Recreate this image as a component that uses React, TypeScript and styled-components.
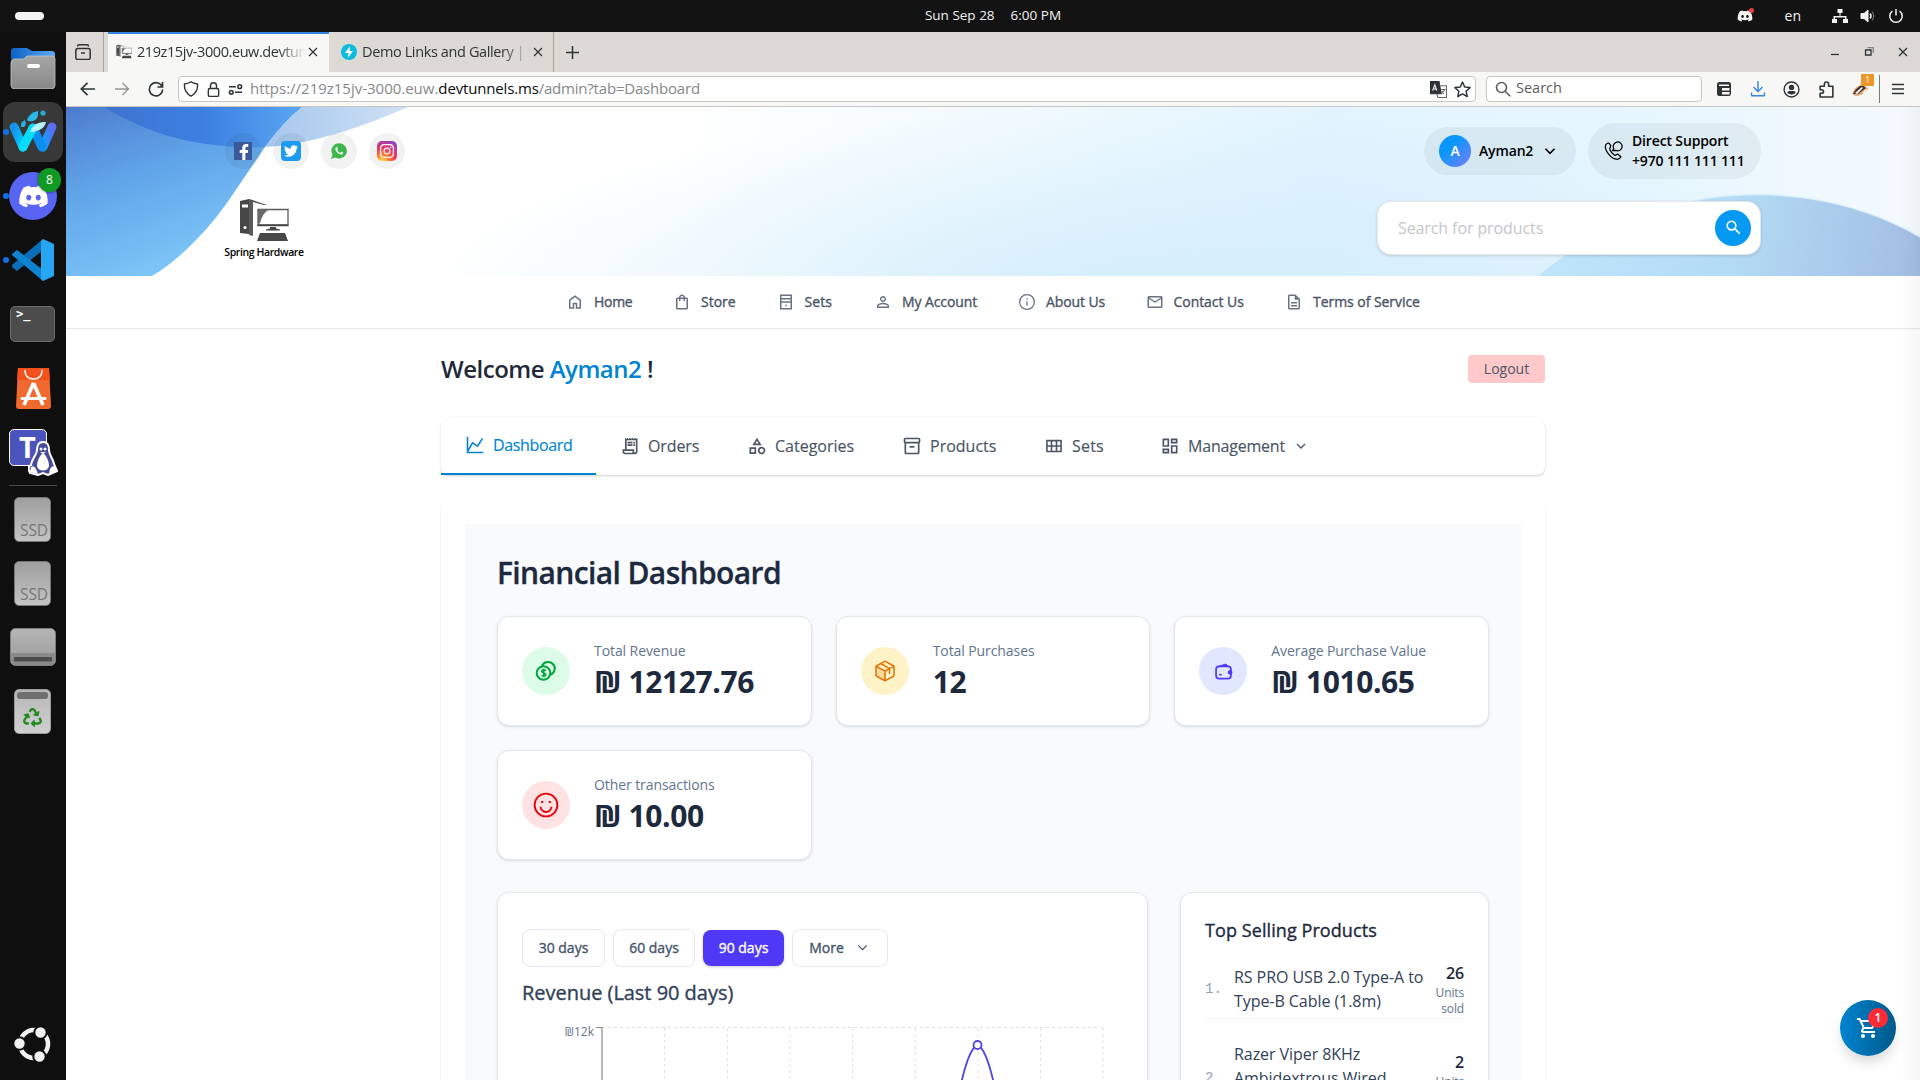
import React from 'react';
import styled, { createGlobalStyle, css } from 'styled-components';
import {
  MdOutlineShoppingBag, MdPersonOutline, MdMailOutline, MdOutlineDescription,
  MdOutlineReceiptLong, MdOutlineCategory, MdOutlineInventory2, MdOutlineDashboard,
  MdSearch, MdOutlineShoppingCart,
} from 'react-icons/md';
import { FaFacebookF, FaTwitter, FaInstagram, FaDiscord, FaRecycle } from 'react-icons/fa';
import { IoLogoWhatsapp } from 'react-icons/io';
import { PiPackageDuotone } from 'react-icons/pi';

const SANS = '"Open Sans", "Noto Sans", sans-serif';

const Global = createGlobalStyle`
  * { box-sizing: border-box; }
  body { margin: 0; font-family: ${SANS}; background: #fff; overflow: hidden; }
  svg { display: block; flex: none; }
`;

const medium = css`
  font-weight: 500;
  -webkit-text-stroke: 0.35px currentColor;
`;

/* ---------- desktop ---------- */

const Desktop = styled.div`
  width: 1920px;
  height: 1080px;
  overflow: hidden;
  display: grid;
  grid-template-rows: 32px 1fr;
  grid-template-columns: 66px 1fr;
  position: relative;
`;

const TopBar = styled.header`
  grid-column: 1 / 3;
  background: #131313;
  color: #f2f2f2;
  display: grid;
  grid-template-columns: 1fr auto 1fr;
  align-items: center;
  padding: 0 16px 1px 15px;
  font-size: 13.5px;
`;

const Workspace = styled.div`
  width: 29px;
  height: 8px;
  border-radius: 4px;
  background: #f4f4f4;
`;

const Clock = styled.div`
  display: flex;
  gap: 16px;
  white-space: nowrap;
  padding: 0 0 2px 67px;
`;

const Tray = styled.div`
  display: flex;
  align-items: center;
  justify-content: flex-end;
`;

const DiscordTray = styled.div`
  position: relative;
  margin-right: 32px;
  &::after {
    content: '';
    position: absolute;
    top: 0;
    right: -1px;
    width: 5px;
    height: 5px;
    border-radius: 50%;
    background: #f23f42;
  }
`;

const Lang = styled.span`
  font-size: 14px;
  margin-right: 31px;
`;

const TrayIcons = styled.div`
  display: flex;
  align-items: center;
  gap: 12px;
`;

const Dock = styled.aside`
  background: #0f0f0f;
  display: flex;
  flex-direction: column;
  align-items: center;
  padding: 4px 0;
`;

const Slot = styled.div<{ $bottom?: boolean; $running?: boolean }>`
  width: 66px;
  height: 64px;
  display: flex;
  align-items: center;
  justify-content: center;
  position: relative;
  flex: none;
  ${p => p.$bottom && css`margin-top: auto;`}
  ${p => p.$running && css`
    &::before {
      content: '';
      position: absolute;
      left: 3px;
      top: 29px;
      width: 6px;
      height: 6px;
      border-radius: 50%;
      background: #0f72e5;
    }
  `}
`;

const ActiveTile = styled.div`
  width: 60px;
  height: 60px;
  border-radius: 12px;
  background: #383838;
  display: flex;
  align-items: center;
  justify-content: center;
`;

const DockBadge = styled.span`
  position: absolute;
  top: 4px;
  right: 5px;
  width: 23px;
  height: 24px;
  border-radius: 12px;
  background: #109a25;
  box-shadow: 0 0 3px #0009;
  color: #fff;
  font-size: 12px;
  line-height: 24px;
  text-align: center;
`;

const DockDivider = styled.div`
  width: 48px;
  height: 1px;
  margin: 1px 0;
  background: #4a4a4a;
  flex: none;
`;

const SsdTile = styled.div`
  width: 37px;
  height: 45px;
  margin-right: 1px;
  border-radius: 5px;
  border: 1px solid #757575;
  background: linear-gradient(#9f9f9f, #c4c4c4);
  color: #777;
  font-size: 15.5px;
  line-height: 65px;
  letter-spacing: -0.1px;
  padding-left: 5px;
  overflow: hidden;
  white-space: nowrap;
`;

const TerminalTile = styled.div`
  width: 45px;
  height: 36px;
  margin-right: 1px;
  border: 1px solid #6d6d6d;
  border-radius: 5px;
  background: #4c4c4c;
  color: #fff;
  font: 700 12px/15px "DejaVu Sans Mono", monospace;
  padding-left: 5px;
`;

/* ---------- browser chrome ---------- */

const Browser = styled.div`
  display: flex;
  flex-direction: column;
  min-width: 0;
  overflow: hidden;
  background: #fff;
`;

const TabStrip = styled.div`
  height: 40px;
  flex: none;
  background: #dddad5;
  display: flex;
  color: #2e3436;
`;

const ViewButton = styled.div`
  width: 38px;
  margin-right: 4px;
  padding-right: 3px;
  border-right: 1px solid #aaa6a0;
  display: flex;
  align-items: center;
  justify-content: center;
`;

const BrowserTab = styled.div<{ $active?: boolean }>`
  width: ${p => (p.$active ? 221 : 225)}px;
  display: flex;
  align-items: center;
  padding: 0 11px 1px ${p => (p.$active ? 8 : 12)}px;
  ${p => p.$active
    ? css`background: #f7f7f5; box-shadow: inset 0 2px #3584e4;`
    : css`border-right: 1px solid #aaa6a0; padding-right: 10px;`}
`;

const TabTitle = styled.span<{ $track: number }>`
  flex: 1;
  margin-left: 5px;
  padding-bottom: 1px;
  overflow: hidden;
  white-space: nowrap;
  font-size: 14.5px;
  letter-spacing: ${p => p.$track}px;
  mask-image: linear-gradient(90deg, #000 82%, transparent 99%);
`;

const NewTab = styled.div`
  width: 36px;
  display: flex;
  align-items: center;
  justify-content: center;
`;

const WindowControls = styled.div`
  margin-left: auto;
  display: flex;
  align-items: center;
  gap: 20px;
  padding-right: 10px;
`;

const Toolbar = styled.div`
  height: 35px;
  flex: none;
  background: #f7f7f5;
  border-bottom: 1px solid #c9c5c0;
  display: flex;
  align-items: center;
  padding: 0 15px 0 14px;
  color: #2e3436;
`;

const NavButtons = styled.div`
  width: 98px;
  display: flex;
  gap: 18px;
`;

const UrlBar = styled.div`
  width: 1298px;
  height: 26px;
  background: #fff;
  border: 1px solid #c9c5c0;
  border-radius: 4px;
  display: flex;
  align-items: center;
  padding: 0 4px;
  gap: 7px;
`;

const Url = styled.div`
  flex: 1;
  font-size: 15px;
  letter-spacing: -0.01px;
  line-height: 22px;
  padding-bottom: 2px;
  color: #85888a;
  white-space: nowrap;
  strong { font-weight: 400; color: #0c0c0d; letter-spacing: -0.16px; }
  em { font-style: normal; letter-spacing: -0.2px; }
`;

const SearchBox = styled.div`
  width: 216px;
  height: 26px;
  margin-left: 10px;
  background: #fff;
  border: 1px solid #c9c5c0;
  border-radius: 4px;
  display: flex;
  align-items: center;
  gap: 5px;
  padding-left: 8px;
  font-size: 14.5px;
  line-height: 22px;
  color: #5b5f61;
  span { padding-bottom: 2px; }
`;

const ToolbarIcons = styled.div`
  margin-left: auto;
  display: flex;
  align-items: center;
  gap: 17.5px;
`;

const BadgerIcon = styled.div`
  position: relative;
  width: 16px;
`;

const BadgerCount = styled.span`
  position: absolute;
  top: -7px;
  right: -6px;
  width: 13px;
  height: 12px;
  background: #ec9528;
  color: #fff;
  font-size: 9px;
  line-height: 11px;
  text-align: center;
`;

const ToolbarRule = styled.div`
  width: 1px;
  height: 28px;
  background: #76797a;
  margin: 0 -6px 0 -7px;
`;

/* ---------- site header ---------- */

const Banner = styled.section`
  height: 169px;
  flex: none;
  position: relative;
`;

const BannerArt = styled.svg`
  position: absolute;
  inset: 0;
`;

const BannerContent = styled.div`
  position: relative;
  width: 1536px;
  height: 169px;
  margin: 0 auto;
  display: flex;
  justify-content: space-between;
`;

const Socials = styled.div`
  display: flex;
  gap: 12px;
  padding-top: 26px;
`;

const SocialCircle = styled.div`
  width: 36px;
  height: 36px;
  border-radius: 50%;
  background: rgba(0, 0, 0, 0.05);
  display: flex;
  align-items: center;
  justify-content: center;
`;

const SocialTile = styled.div<{ $bg: string; $size: number; $radius: number; $end?: boolean }>`
  width: ${p => p.$size}px;
  height: ${p => p.$size}px;
  border-radius: ${p => p.$radius}px;
  background: ${p => p.$bg};
  color: #fff;
  display: flex;
  align-items: ${p => (p.$end ? 'flex-end' : 'center')};
  justify-content: ${p => (p.$end ? 'flex-end' : 'center')};
  overflow: hidden;
`;

const Brand = styled.div`
  width: 78px;
  margin-top: 30px;
  display: flex;
  flex-direction: column;
  align-items: center;
  font-size: 10.5px;
  font-weight: 600;
  letter-spacing: -0.4px;
  line-height: 14px;
  white-space: nowrap;
  color: #000;
`;

const BrandName = styled.span`margin-top: 4px;`;

const HeaderRight = styled.div`
  display: flex;
  flex-direction: column;
  align-items: flex-end;
  padding-top: 16px;
`;

const Pills = styled.div`
  display: flex;
  align-items: center;
  gap: 12px;
`;

const Pill = styled.div<{ $w: number; $h: number; $gap: number }>`
  width: ${p => p.$w}px;
  height: ${p => p.$h}px;
  padding: 0 15px;
  border-radius: 28px;
  background: rgba(20, 30, 40, 0.055);
  display: flex;
  align-items: center;
  gap: ${p => p.$gap}px;
  font-size: 14px;
  font-weight: 600;
  letter-spacing: -0.15px;
  line-height: 20px;
  color: #000;
  white-space: nowrap;
`;

const Avatar = styled.span`
  width: 32px;
  height: 32px;
  border-radius: 50%;
  background: linear-gradient(135deg, #0a97fb 35%, #7c7cfb);
  color: #fff;
  line-height: 32px;
  text-align: center;
`;

const SiteSearch = styled.div`
  width: 384px;
  height: 54px;
  margin-top: 22px;
  border-radius: 14px;
  background: #fff;
  border: 1px solid #e5e7eb;
  box-shadow: 0 1px 3px rgba(0, 0, 0, 0.14);
  display: flex;
  align-items: center;
  justify-content: space-between;
  padding: 0 9px 1px 20px;
  font-size: 16px;
  letter-spacing: -0.1px;
  color: #c3c6cb;
`;

const SearchButton = styled.span`
  width: 36px;
  height: 36px;
  border-radius: 50%;
  background: #0599f4;
  color: #fff;
  display: flex;
  align-items: center;
  justify-content: center;
`;

const SiteNav = styled.nav`
  height: 53px;
  flex: none;
  border-bottom: 1px solid #e5e7eb;
  display: flex;
  justify-content: center;
  gap: 40px;
`;

const SiteNavItem = styled.a<{ $w: number; $track: number }>`
  width: ${p => p.$w}px;
  display: flex;
  align-items: center;
  gap: 10px;
  font-size: 14px;
  letter-spacing: ${p => p.$track}px;
  ${medium}
  color: #4a5565;
  white-space: nowrap;
  svg { color: #6a7282; }
  span { padding-bottom: 1px; }
`;

/* ---------- admin ---------- */

const Main = styled.main`
  width: 1104px;
  margin: 0 auto;
  flex: 1;
`;

const WelcomeRow = styled.div`
  height: 88px;
  display: flex;
  align-items: center;
  justify-content: space-between;
  padding-bottom: 8px;
`;

const Welcome = styled.h1`
  margin: 0;
  font-size: 24px;
  font-weight: 600;
  line-height: 32px;
  letter-spacing: -0.5px;
  color: #1e2939;
  span { color: #0084d1; }
`;

const Logout = styled.button`
  width: 77px;
  height: 28px;
  padding: 0;
  border: 0;
  border-radius: 4px;
  background: #ffc9c9;
  color: #4a5565;
  font: 400 14px/26px ${SANS};
`;

const AdminTabs = styled.div`
  height: 58px;
  border-radius: 12px 12px 8px 8px;
  box-shadow: 0 1px 3px rgba(0, 0, 0, 0.1), 0 1px 2px rgba(0, 0, 0, 0.1);
  display: flex;
  align-items: stretch;
`;

const AdminTab = styled.div<{ $w: number; $pad?: number; $active?: boolean; $track?: number }>`
  width: ${p => p.$w}px;
  padding-left: ${p => p.$pad ?? 24}px;
  display: flex;
  align-items: center;
  gap: 8px;
  font-size: 16px;
  letter-spacing: ${p => p.$track ?? 0}px;
  -webkit-text-stroke: 0.15px currentColor;
  white-space: nowrap;
  color: ${p => (p.$active ? '#0084d1' : '#4a5565')};
  border-bottom: ${p => (p.$active ? '2px solid #0084d1' : '0')};
`;

const Panel = styled.section`
  margin-top: 25px;
  padding: 24px 24px;
  height: 700px;
  border-radius: 8px;
  box-shadow: 0 2px 3px rgba(0, 0, 0, 0.08);
`;

const Board = styled.div`
  padding: 32px;
  height: 700px;
  background: #f8fafc;
`;

const BoardTitle = styled.h2`
  margin: 0 0 24px;
  font-size: 30px;
  font-weight: 600;
  line-height: 34px;
  padding-bottom: 2px;
  letter-spacing: -0.62px;
  -webkit-text-stroke: 0.3px currentColor;
  color: #1d293d;
`;

const cardBox = css`
  background: #fff;
  border: 1px solid #e2e8f0;
  border-radius: 12px;
  box-shadow: 0 1px 3px rgba(0, 0, 0, 0.1), 0 1px 2px -1px rgba(0, 0, 0, 0.1);
`;

const Stats = styled.div`
  display: grid;
  grid-template-columns: repeat(3, 1fr);
  gap: 24px;
`;

const StatCard = styled.div`
  ${cardBox}
  height: 110px;
  padding: 24px;
  display: flex;
  align-items: center;
  gap: 24px;
`;

const StatIcon = styled.div<{ $bg: string; $fg: string }>`
  width: 48px;
  height: 48px;
  border-radius: 50%;
  background: ${p => p.$bg};
  color: ${p => p.$fg};
  display: flex;
  align-items: center;
  justify-content: center;
`;

const StatLabel = styled.div`
  font-size: 14px;
  line-height: 20px;
  margin-bottom: 3px;
  letter-spacing: -0.08px;
  color: #62748e;
`;

const StatValue = styled.div`
  font-size: 30px;
  font-weight: 700;
  line-height: 36px;
  padding-bottom: 1px;
  letter-spacing: -0.4px;
  color: #1d293d;
  white-space: nowrap;
`;

const Lower = styled.div`
  display: grid;
  grid-template-columns: 651px 1fr;
  gap: 32px;
  margin-top: 32px;
`;

const RevenueCard = styled.div`
  ${cardBox}
  height: 460px;
  padding: 36px 24px 0;
`;

const Ranges = styled.div`
  display: flex;
  gap: 8px;
  align-items: center;
`;

const RangeButton = styled.button<{ $w: number; $on?: boolean }>`
  width: ${p => p.$w}px;
  height: ${p => (p.$on ? 36 : 38)}px;
  padding: 0 0 1px;
  display: flex;
  align-items: center;
  justify-content: center;
  gap: 10px;
  border-radius: 8px;
  border: ${p => (p.$on ? '0' : '1px solid #e2e8f0')};
  background: ${p => (p.$on ? '#4f39f6' : '#fff')};
  color: ${p => (p.$on ? '#fff' : '#45556c')};
  box-shadow: ${p => (p.$on ? '0 1px 3px rgba(0,0,0,.2)' : 'none')};
  font: 500 14px ${SANS};
  ${medium}
`;

const ChartTitle = styled.h3`
  margin: 12px 0 5px;
  font-size: 20px;
  ${medium}
  line-height: 28px;
  letter-spacing: -0.03px;
  color: #314158;
`;

const AxisLabel = styled.text`
  font: 400 12px ${SANS};
  fill: #64748b;
`;

const TopCard = styled.div`
  ${cardBox}
  height: 460px;
  padding: 23px 24px 0;
`;

const TopTitle = styled.h3`
  margin: 0 0 17px;
  font-size: 18px;
  ${medium}
  line-height: 28px;
  letter-spacing: 0.08px;
  color: #1d293d;
`;

const ProductRow = styled.div`
  display: flex;
  align-items: center;
  padding-bottom: 1px;
  margin-bottom: 23px;
  border-bottom: 1px solid #f1f5f9;
`;

const Rank = styled.span`
  width: 29px;
  font: 14px/20px "Liberation Mono", monospace;
  color: #90a1b9;
`;

const ProductName = styled.span`
  flex: 1;
  font-size: 16px;
  line-height: 24px;
  letter-spacing: -0.06px;
  color: #314158;
`;

const Sold = styled.div`
  width: 29px;
  text-align: right;
  font-size: 12px;
  line-height: 16px;
  letter-spacing: -0.15px;
  color: #62748e;
  margin-left: 8px;
  b { display: block; font-size: 16px; font-weight: 600; line-height: 24px; color: #1d293d; }
`;

const CartButton = styled.div`
  position: absolute;
  left: 1840px;
  top: 1000px;
  width: 56px;
  height: 56px;
  border-radius: 50%;
  background: linear-gradient(90deg, #0084d1, #00598a);
  box-shadow: 0 8px 14px -3px rgba(0, 0, 0, 0.18);
  display: flex;
  align-items: center;
  justify-content: center;
  color: #fff;
`;

const CartCount = styled.span`
  position: absolute;
  top: 8px;
  right: 8px;
  width: 20px;
  height: 20px;
  border-radius: 50%;
  background: #fb2c36;
  font-size: 12px;
  font-weight: 600;
  line-height: 20px;
  text-align: center;
`;

const EdgeShade = styled.div`
  position: absolute;
  right: 0;
  top: 107px;
  bottom: 0;
  width: 20px;
  background: linear-gradient(90deg, transparent, rgba(0, 0, 0, 0.035));
`;

/* ---------- drawings ---------- */

type LineProps = { s?: number; w?: number; vb?: number; children: React.ReactNode };
const Line = ({ s = 18, w = 1.6, vb = 24, children }: LineProps) => (
  <svg width={s} height={s} viewBox={`0 0 ${vb} ${vb}`} fill="none" stroke="currentColor" strokeWidth={w}>{children}</svg>
);

const FilesIcon = () => (
  <svg width="46" height="42" viewBox="0 0 46 42">
    <defs>
      <linearGradient id="fb" x2="1"><stop stopColor="#0b62c4" /><stop offset="1" stopColor="#5aa9f5" /></linearGradient>
      <linearGradient id="fg" x2="0" y2="1"><stop stopColor="#a6a6a6" /><stop offset="1" stopColor="#888" /></linearGradient>
    </defs>
    <path d="M1 12V4q0-3 3-3h13l5 3h20q3 0 3 3v9H1z" fill="url(#fb)" />
    <path d="M1 16q0-3 3-4l10 0 3-3h25q3 0 3 3v26q0 4-4 4H5q-4 0-4-4z" fill="url(#fg)" stroke="#c4c4c4" strokeWidth=".8" />
    <rect x="17" y="17" width="13" height="4" rx="2" fill="#fff" />
  </svg>
);

const WaterfoxIcon = () => (
  <svg width="50" height="44" viewBox="0 0 50 44" fill="none" strokeLinecap="round">
    <defs>
      <linearGradient id="w1" x2="1" y2="1"><stop stopColor="#1691ec" /><stop offset="1" stopColor="#00d5ff" /></linearGradient>
      <linearGradient id="w2" x1="1" x2="0" y2="1"><stop stopColor="#5c6cf0" /><stop offset="1" stopColor="#08a5ff" /></linearGradient>
    </defs>
    <path d="M44 17 35 37" stroke="url(#w2)" strokeWidth="9" />
    <path d="M25 18 34 37" stroke="#0a8fee" strokeWidth="9" />
    <path d="M6 17 15 37" stroke="url(#w1)" strokeWidth="9" />
    <path d="M15 37 25 18" stroke="#08dcff" strokeWidth="9" />
    <path d="M22 22q4-11 16-10-2 9-16 10z" fill="#b8f3ff" />
    <path d="M19 10q2-7 11-9 1 8-5 10-5 1-6-1z" fill="#2bb8e8" />
    <circle cx="35" cy="3" r="2.6" fill="#2aa8d8" />
    <path d="M13 17q-1-5 4-7 2 5-1 7z" fill="#25b0df" />
  </svg>
);

const VsCodeIcon = () => (
  <svg width="42" height="42" viewBox="0 0 42 42">
    <path d="M31 0v11L5 32 0 28v-2z" fill="#0a6fb8" />
    <path d="M0 15 5 11l26 20v11L0 16z" fill="#0f83cf" />
    <path d="M31 0 42 5v32l-11 5-2-2V2z" fill="#27a5f0" />
  </svg>
);

const AppCenterIcon = () => (
  <svg width="37" height="42" viewBox="0 0 37 42" fill="none">
    <path d="M3 1h31l2 38q0 3-3 3H4q-3 0-3-3z" fill="#f06a30" />
    <path d="M3 1h31l.8 12H2z" fill="#f4511c" />
    <g stroke="#fff">
      <path d="M10 3q0 9 8.500 9t8.500-9" strokeWidth="1.600" />
      <path d="M18.500 16 9 38M18.500 16 28 38" strokeWidth="3.600" />
      <path d="M7 31.500h23" strokeWidth="3" strokeLinecap="round" />
    </g>
  </svg>
);

const TeamsTile = styled.div`
  position: relative;
  width: 47px;
  height: 47px;
`;
const TeamsSquare = styled.div`
  width: 38px;
  height: 37px;
  margin-left: -1px;
  border: 1.5px solid #fff;
  border-radius: 5px;
  background: #4b53bc;
  color: #fff;
  font: 700 29px/33px ${SANS};
  text-align: center;
`;
const Penguin = styled.svg`
  position: absolute;
  right: -1px;
  bottom: 0;
`;

const TeamsIcon = () => (
  <TeamsTile>
    <TeamsSquare>T</TeamsSquare>
    <Penguin width="30" height="35" viewBox="0 0 30 35">
      <path d="M15 1c-5 0-6 4-6 8 0 5-5 8-6 15-3 1-3 4-1 8l8 2 5-2 5 2 9-4-3-7c-1-6-5-9-5-14 0-5-1-8-6-8z" fill="#464a9b" stroke="#fff" strokeWidth="2" />
      <path d="M15 12c-4 3-6 9-6 13 1 6 11 6 12 0 0-4-2-10-6-13z" fill="#fff" />
      <path d="M3 26q3-2 5 2l2 5-8-2zM27 26q-3-2-5 2l-1 5 7-3z" fill="#fff" />
      <circle cx="13" cy="8" r="1.500" fill="#fff" /><circle cx="17" cy="8" r="1.500" fill="#fff" />
      <path d="M12 11h6l-3 2z" fill="#fff" />
    </Penguin>
  </TeamsTile>
);

const DriveIcon = () => (
  <svg width="46" height="38" viewBox="0 0 46 38">
    <defs><linearGradient id="dr" x2="0" y2="1"><stop stopColor="#b5b5b5" /><stop offset="1" stopColor="#9b9b9b" /></linearGradient></defs>
    <rect x=".5" y=".5" width="45" height="37" rx="5" fill="url(#dr)" stroke="#7e7e7e" />
    <path d="M1 25h44v8q0 4-5 4H6q-5 0-5-4z" fill="#8a8a8a" />
    <rect x="4" y="29" width="38" height="4.500" rx="1" fill="#4c4c4c" />
  </svg>
);

const TrashTile = styled.div`
  width: 37px;
  height: 45px;
  margin-right: 1px;
  border-radius: 5px;
  border: 1px solid #9a9a9a;
  background: linear-gradient(#b6b6b6, #d0d0d0);
  color: #248a22;
  display: flex;
  flex-direction: column;
  align-items: center;
  gap: 9px;
  padding-top: 2px;
  &::before {
    content: '';
    width: 31px;
    height: 7px;
    border-radius: 3px;
    background: #6f6f6f;
    flex: none;
  }
`;

const UbuntuIcon = () => (
  <svg width="38" height="38" viewBox="0 0 38 38" fill="none">
    <circle cx="20" cy="19" r="14" stroke="#f2f2f2" strokeWidth="4.500" />
    <g fill="#f2f2f2" stroke="#0f0f0f" strokeWidth="2">
      <circle cx="5.500" cy="18.500" r="6.200" /><circle cx="26.500" cy="7.500" r="6.200" /><circle cx="25.500" cy="31.500" r="6.200" />
    </g>
  </svg>
);

const ComputerLogo = ({ w = 50, h = 42 }: { w?: number; h?: number }) => (
  <svg width={w} height={h} viewBox="0 0 50 42">
    <path d="M1 2 10 0v35L1 34z" fill="#474747" />
    <path d="M10 0 28 6h-3L11 2z" fill="#444" />
    <path d="M10 0 14 2v35l-4-1z" fill="#5a5a5a" />
    <rect x="3" y="5.500" width="6" height="3" fill="#fff" />
    <circle cx="6" cy="28.500" r="1.500" fill="#fff" />
    <path d="M19 10.500h30V26H19z" fill="#fff" stroke="#5a5a5a" strokeWidth="1.300" />
    <path d="M19 10.500h11q-7 4-9 14h-2z" fill="#6b6b6b" />
    <path d="M18.500 25.500h31v1.800h-31zM31 28h6v1.500l4 1v1H27v-1l4-1z" fill="#474747" />
    <path d="M21 34h25l3 8H18z" fill="#474747" />
  </svg>
);

const ChevronDown = ({ s = 16, w = 2 }: { s?: number; w?: number }) => <Line s={s} w={w}><path d="m6 9 6 6 6-6" /></Line>;

const bannerPaths = {
  blue: 'M0 0H236Q218 14 199 40L163 93Q147 116 130 133Q108 156 86 169H0Z',
  swoosh: 'M38 0C75 22 120 42 199 40Q218 14 236 0Z',
  pale: 'M236 0H342C300 18 250 37 199 40Q218 14 236 0Z',
};

const BannerBackground = () => (
  <BannerArt width="1854" height="169" viewBox="0 0 1854 169" preserveAspectRatio="none">
    <defs>
      <linearGradient id="sky" x1="0" y1="0" x2="1854" y2="0" gradientUnits="userSpaceOnUse">
        <stop offset="0" stopColor="#fff" /><stop offset=".33" stopColor="#fff" /><stop offset=".5" stopColor="#f2fafe" />
        <stop offset=".68" stopColor="#e2f4fe" /><stop offset=".85" stopColor="#e6f6fe" /><stop offset="1" stopColor="#f5fafe" />
      </linearGradient>
      <radialGradient id="lit" gradientUnits="userSpaceOnUse" cx="0" cy="0" r="1" gradientTransform="translate(1080 190) scale(720 190)">
        <stop stopColor="#cdebfb" stopOpacity=".85" /><stop offset="1" stopColor="#cdebfb" stopOpacity="0" />
      </radialGradient>
      <linearGradient id="left" x1="0" y1="0" x2="60" y2="169" gradientUnits="userSpaceOnUse"><stop stopColor="#4c7ccd" /><stop offset=".5" stopColor="#62a6ea" /><stop offset="1" stopColor="#7cc3f6" /></linearGradient>
      <linearGradient id="deep" x2="1"><stop stopColor="#3f75cf" /><stop offset=".5" stopColor="#3c7fe2" /><stop offset="1" stopColor="#5aa7f1" /></linearGradient>
      <linearGradient id="pale" x2="1"><stop stopColor="#a5c7ee" /><stop offset="1" stopColor="#d0e1f4" /></linearGradient>
      <linearGradient id="wave" x1="1480" y1="120" x2="1854" y2="169" gradientUnits="userSpaceOnUse"><stop stopColor="#bfe5fa" /><stop offset=".5" stopColor="#b3dbf5" /><stop offset="1" stopColor="#a2bde3" /></linearGradient>
    </defs>
    <rect width="1854" height="169" fill="url(#sky)" />
    <rect width="1854" height="169" fill="url(#lit)" />
    <path d={bannerPaths.blue} fill="url(#left)" />
    <path d={bannerPaths.swoosh} fill="url(#deep)" />
    <path d={bannerPaths.pale} fill="url(#pale)" />
    <path d="M1472 169Q1550 105 1626 94C1700 79 1785 90 1854 130V169Z" fill="url(#wave)" />
    <path d="M1626 94C1700 79 1785 90 1854 130" fill="none" stroke="#d9effb" strokeWidth="1.500" />
  </BannerArt>
);

const gridX = [80, 142.6, 205.3, 268, 330.7, 393.300, 456, 518.600, 581];

const RevenueChart = () => (
  <svg width="600" height="180" viewBox="0 0 600 180" fill="none">
    <g stroke="#dfe1e4" strokeDasharray="3 3">
      <path d="M80 15.500H581" strokeWidth="1.200" />
      {gridX.slice(1).map(x => <path key={x} d={`M${x} 16V180`} />)}
    </g>
    <path d="M74 15.500h6V180" stroke="#8a8a8a" strokeWidth="1.200" />
    <AxisLabel x="72" y="23.500" textAnchor="end">₪12k</AxisLabel>
    <path d="M431 110C437 80 445 36 455.500 33.500C466 36 474 80 480 110" stroke="#4f46e5" strokeWidth="1.800" />
    <circle cx="455.500" cy="33" r="4" fill="#fff" stroke="#4f46e5" strokeWidth="1.800" />
  </svg>
);

/* ---------- data ---------- */

const siteNav = [
  { label: 'Home', w: 67, track: -0.3, icon: <svg width="18" height="18" viewBox="0 0 24 24" fill="currentColor"><path d="M6 19h3v-6h6v6h3v-9l-6-4.500L6 10zm-2 2V9l8-6 8 6v12h-7v-6h-2v6z" /></svg> },
  { label: 'Store', w: 63.5, track: 0, icon: <MdOutlineShoppingBag size={18} /> },
  { label: 'Sets', w: 57.5, track: 0.1, icon: <Line w={2}><path d="M5 3h14v18H5zM5 7.500h14M5 12h14" /><path d="M11 16.500h2" /></Line> },
  { label: 'My Account', w: 104, track: -0.1, icon: <MdPersonOutline size={18} /> },
  { label: 'About Us', w: 87.5, track: -0.1, icon: <Line w={1.700}><circle cx="12" cy="12" r="9.800" /><path d="M12 11v6M12 7v2" /></Line> },
  { label: 'Contact Us', w: 99.5, track: -0.05, icon: <MdMailOutline size={18} /> },
  { label: 'Terms of Service', w: 135, track: -0.05, icon: <MdOutlineDescription size={18} /> },
];

const products = [
  { rank: '1.', name: 'RS PRO USB 2.0 Type-A to Type-B Cable (1.8m)', sold: 26 },
  { rank: '2.', name: 'Razer Viper 8KHz Ambidextrous Wired Gaming Mouse', sold: 2 },
];

const stats = [
  {
    label: 'Total Revenue', value: '₪ 12127.76', bg: '#dcfce7', fg: '#00a63e',
    icon: (
      <Line s={24} w={2}>
        <circle cx="9.500" cy="14" r="6.800" /><path d="M8 7.200a6.600 6.600 0 1 1 8.300 8.600" />
        <path d="M12 11.600q-2.500-1.400-4 0-.8 1.500 1.500 2.300 3 .9 2 2.500-1.500 1.300-4 0M9.700 9.800v8.400" strokeWidth="1.600" />
      </Line>
    ),
  },
  { label: 'Total Purchases', value: '12', bg: '#fef3c6', fg: '#e17100', icon: <PiPackageDuotone size={24} /> },
  {
    label: 'Average Purchase Value', value: '₪ 1010.65', bg: '#e0e7ff', fg: '#4f39f6',
    icon: (
      <Line s={21} w={2}>
        <rect x="3.500" y="6" width="17" height="14" rx="3.500" /><path d="M5 6.500 14.500 3.500 17.500 6z" fill="currentColor" strokeWidth="1" />
        <circle cx="19.500" cy="13" r="2.200" fill="currentColor" strokeWidth="1" /><path d="M7 15.700h3" strokeWidth="1.800" />
      </Line>
    ),
  },
  {
    label: 'Other transactions', value: '₪ 10.00', bg: '#ffe2e2', fg: '#e7000b',
    icon: (
      <Line s={26} w={1.700}>
        <circle cx="12" cy="12" r="10.500" /><path d="M7 13.500a5 5 0 0 0 10 0" />
        <path d="M8.500 8.200v2M15.500 8.200v2" strokeWidth="2" />
      </Line>
    ),
  },
];

export default function App() {
  return (
    <Desktop>
      <Global />
      <TopBar>
        <Workspace />
        <Clock><span>Sun Sep 28</span><span>6:00 PM</span></Clock>
        <Tray>
          <DiscordTray><FaDiscord size={16} /></DiscordTray>
          <Lang>en</Lang>
          <TrayIcons>
            <svg width="16" height="16" viewBox="0 0 16 16" fill="#f2f2f2"><path d="M5.500 1h5v4h-2v3h6v3H16v4h-5v-4h2V9.500H3V11h2v4H0v-4h1.500V8h6V5h-2z" /></svg>
            <svg width="16" height="16" viewBox="0 0 16 16" fill="none" stroke="#f2f2f2"><path d="M1 5.500h3L8 2v12l-4-3.500H1z" fill="#f2f2f2" /><path d="M10 5.500q2 2.500 0 5" strokeWidth="1.500" /><path d="M12 3.500q3.500 4.500 0 9" opacity=".5" /></svg>
            <svg width="16" height="16" viewBox="0 0 16 16" fill="none" stroke="#f2f2f2" strokeWidth="1.500"><path d="M4.500 3a6.200 6.200 0 1 0 7 0M8 1v6.500" /></svg>
          </TrayIcons>
        </Tray>
      </TopBar>

      <Dock>
        <Slot><FilesIcon /></Slot>
        <Slot $running><ActiveTile><WaterfoxIcon /></ActiveTile></Slot>
        <Slot $running>
          <SocialTile $bg="#5865f2" $size={48} $radius={24}><FaDiscord size={31} /></SocialTile>
          <DockBadge>8</DockBadge>
        </Slot>
        <Slot $running><VsCodeIcon /></Slot>
        <Slot><TerminalTile>&gt;_</TerminalTile></Slot>
        <Slot><AppCenterIcon /></Slot>
        <Slot><TeamsIcon /></Slot>
        <DockDivider />
        <Slot><SsdTile>SSD</SsdTile></Slot>
        <Slot><SsdTile>SSD</SsdTile></Slot>
        <Slot><DriveIcon /></Slot>
        <Slot><TrashTile><FaRecycle size={19} /></TrashTile></Slot>
        <Slot $bottom><UbuntuIcon /></Slot>
      </Dock>

      <Browser>
        <TabStrip>
          <ViewButton>
            <Line s={16} w={1.500} vb={16}><rect x=".8" y="4.500" width="14.400" height="11" rx="2" /><path d="M2.500 2.500q0-1.700 1.500-1.700h8q1.500 0 1.500 1.700M6 9h4" /></Line>
          </ViewButton>
          <BrowserTab $active>
            <ComputerLogo w={16} h={15} />
            <TabTitle $track={-0.420}>219z15jv-3000.euw.devtunnels.ms</TabTitle>
            <Line s={10} w={1.200} vb={10}><path d="m1 1 8 8M9 1 1 9" /></Line>
          </BrowserTab>
          <BrowserTab>
            <svg width="16" height="16" viewBox="0 0 16 16"><circle cx="8" cy="8" r="8" fill="#0bbbe0" /><path d="M9 2 4 9h3.500L7 14l5-7H8.500z" fill="#fff" /></svg>
            <TabTitle $track={-0.380}>Demo Links and Gallery | Ser</TabTitle>
            <Line s={10} w={1.200} vb={10}><path d="m1 1 8 8M9 1 1 9" /></Line>
          </BrowserTab>
          <NewTab><Line s={13} w={1.500} vb={13}><path d="M6.500 0v13M0 6.500h13" /></Line></NewTab>
          <WindowControls>
            <Line s={14} w={1.300} vb={14}><path d="M3 9.500h8" /></Line>
            <Line s={14} w={1.300} vb={14}><path d="M3.500 5h5.500v5H3.500z" /><path d="M5.500 2.700h5.800V8" opacity=".5" /></Line>
            <Line s={14} w={1.300} vb={14}><path d="m3 3 8 8M11 3l-8 8" /></Line>
          </WindowControls>
        </TabStrip>

        <Toolbar>
          <NavButtons>
            <Line s={16} w={1.700} vb={16}><path d="M1 8h14M7.500 1.800 1.300 8l6.200 6.200" /></Line>
            <Line s={16} w={1.300} vb={16}><path d="M1 8h13M8.500 2 14.500 8l-6 6" opacity=".5" /></Line>
            <Line s={16} w={1.600} vb={16}><path d="M14 5.500A6.600 6.600 0 1 0 14.600 8.500M14.500 1v5h-5" /></Line>
          </NavButtons>
          <UrlBar>
            <Line s={16} w={1.400} vb={16}><path d="M8 .8C6 2.200 4 2.800 1.500 3q-.8 8 6.500 12.200Q15.300 11 14.500 3 10 2.500 8 .8z" /></Line>
            <Line s={15} w={1.500} vb={16}><rect x="2.500" y="7" width="11" height="8.300" rx="1.500" /><path d="M4.800 7V4a3.200 3.200 0 0 1 6.400 0v3" /></Line>
            <Line s={15} w={1.600} vb={16}><circle cx="12.500" cy="5" r="2" /><circle cx="3.500" cy="11" r="2" /><path d="M1 5h7.500M7.500 11H15" /></Line>
            <Url>https://219z15jv-3000.euw.<strong>devtunnels.ms</strong><em>/admin?tab=Dashboard</em></Url>
            <svg width="17" height="17" viewBox="0 0 16 16" fill="none" stroke="#2e3436">
              <path d="M.5.500h8l2 11.500H.5z" fill="#2e3436" /><path d="M2.500 9 4.500 3.500 6.500 9M3 7.500h3" stroke="#fff" /><path d="M9.500 4.500h6v11h-8l-1-3M10.500 8h3.500l-3 4M11 9.500l2 2.500" stroke="#666" />
            </svg>
            <Line s={17} w={1.400} vb={16}><path d="m8 1 2.100 4.600 5 .6-3.700 3.400 1 5L8 12.100l-4.400 2.500 1-5L.9 6.200l5-.6z" strokeLinejoin="round" /></Line>
          </UrlBar>
          <SearchBox>
            <Line s={16} w={1.600} vb={16}><circle cx="6.500" cy="6.500" r="5" /><path d="m10.200 10.200 5 5" /></Line>
            <span>Search</span>
          </SearchBox>
          <ToolbarIcons>
            <svg width="16" height="16" viewBox="0 0 16 16"><rect x="1" y="1" width="14" height="14" rx="2.500" fill="#2e3436" /><path d="M3 3.500h10V5H3zM6 7h7.500v2.500H6zM6 11h7.500v2.500H6z" fill="#f7f7f5" /></svg>
            <svg width="16" height="16" viewBox="0 0 16 16" fill="none" stroke="#3584e4" strokeWidth="1.400"><path d="M8 0v10M3.500 6 8 10.500 12.500 6M1.500 11.500V14q0 .8.800.8h11.400q.8 0 .8-.8v-2.500" /></svg>
            <Line s={17} w={1.300} vb={16}><circle cx="8" cy="8" r="7" /><circle cx="8" cy="6" r="1.900" fill="currentColor" /><path d="M4.800 11q0-1 1.200-1h4q1.200 0 1.200 1L8 12.200z" fill="currentColor" /></Line>
            <Line s={17} w={1.500} vb={16}><path d="M2 5h4V3a2 2 0 0 1 4 0v2h4v10H2v-3.500h1.500a1.600 1.600 0 0 0 0-3.300H2z" strokeLinejoin="round" /></Line>
            <BadgerIcon>
              <svg width="17" height="16" viewBox="0 0 17 16"><path d="M0 13Q3 5 11 3l5 5q-4 6-12 7z" fill="#e5a06a" /><path d="M1 13Q4 7 10 4l4 3-8 6z" fill="#3b3030" /><path d="m3 12 7-6 1 1-6 6zM10 12l4-4 1 1-3 3z" fill="#fff" /></svg>
              <BadgerCount>1</BadgerCount>
            </BadgerIcon>
            <ToolbarRule />
            <Line s={14} w={1.500} vb={14}><path d="M1 2.500h12M1 7h12M1 11.500h12" /></Line>
          </ToolbarIcons>
        </Toolbar>

        <Banner>
          <BannerBackground />
          <BannerContent>
            <div>
              <Socials>
                <SocialCircle><SocialTile $bg="#3b5998" $size={18} $radius={0} $end><FaFacebookF size={16} /></SocialTile></SocialCircle>
                <SocialCircle><SocialTile $bg="#1d9bf0" $size={20} $radius={4}><FaTwitter size={14} /></SocialTile></SocialCircle>
                <SocialCircle><IoLogoWhatsapp size={18} color="#3cb74b" /></SocialCircle>
                <SocialCircle>
                  <SocialTile $bg="radial-gradient(circle at 25% 105%, #ffd54a 5%, #ff7a2f 30%, #f03466 55%, #6b4be0 100%)" $size={20} $radius={5}><FaInstagram size={16} /></SocialTile>
                </SocialCircle>
              </Socials>
              <Brand><ComputerLogo /><BrandName>Spring Hardware</BrandName></Brand>
            </div>
            <HeaderRight>
              <Pills>
                <Pill $w={152} $h={48} $gap={8}><Avatar>A</Avatar>Ayman2<ChevronDown s={18} w={2.200} /></Pill>
                <Pill $w={173} $h={56} $gap={9}>
                  <Line s={20} w={1.500}>
                    <path d="M9.500 5.500 7 2.500Q5 2 3.300 4.500 1.500 9 6.500 15.500T17 22q3.500-.5 4.500-3l-4-3.300-3 1.800Q9.500 14.500 8 9.500z" strokeLinejoin="round" />
                    <path d="M11.500 11.500 13 9a5.300 5.300 0 1 1 2.500 2.300z" strokeLinejoin="round" />
                  </Line>
                  <div>Direct Support<br />+970 111 111 111</div>
                </Pill>
              </Pills>
              <SiteSearch>Search for products<SearchButton><MdSearch size={19} /></SearchButton></SiteSearch>
            </HeaderRight>
          </BannerContent>
        </Banner>

        <SiteNav>
          {siteNav.map(n => <SiteNavItem key={n.label} $w={n.w} $track={n.track}>{n.icon}<span>{n.label}</span></SiteNavItem>)}
        </SiteNav>

        <Main>
          <WelcomeRow>
            <Welcome>Welcome <span>Ayman2</span> !</Welcome>
            <Logout>Logout</Logout>
          </WelcomeRow>

          <AdminTabs>
            <AdminTab $w={155} $active $track={-0.350}>
              <Line s={20} w={1.900}><path d="M3 2v19h19M3.500 19 9 9.500l6 4L21 4" /></Line>Dashboard
            </AdminTab>
            <AdminTab $w={127} $track={-0.100}><MdOutlineReceiptLong size={20} />Orders</AdminTab>
            <AdminTab $w={155}><MdOutlineCategory size={20} />Categories</AdminTab>
            <AdminTab $w={142}><MdOutlineInventory2 size={20} />Products</AdminTab>
            <AdminTab $w={132} $track={0.200}>
              <Line s={20} w={1.900}><path d="M3.500 5.500h17v13h-17zM3.500 12h17M9 5.500v13M15 5.500v13" strokeLinejoin="round" /></Line>Sets
            </AdminTab>
            <AdminTab $w={200} $pad={8} $track={-0.200}><MdOutlineDashboard size={20} />Management<ChevronDown s={16} w={2} /></AdminTab>
          </AdminTabs>

          <Panel>
            <Board>
              <BoardTitle>Financial Dashboard</BoardTitle>
              <Stats>
                {stats.map(s => (
                  <StatCard key={s.label}>
                    <StatIcon $bg={s.bg} $fg={s.fg}>{s.icon}</StatIcon>
                    <div>
                      <StatLabel>{s.label}</StatLabel>
                      <StatValue>{s.value}</StatValue>
                    </div>
                  </StatCard>
                ))}
              </Stats>
              <Lower>
                <RevenueCard>
                  <Ranges>
                    <RangeButton $w={83}>30 days</RangeButton>
                    <RangeButton $w={82}>60 days</RangeButton>
                    <RangeButton $w={81} $on>90 days</RangeButton>
                    <RangeButton $w={96}>More<ChevronDown s={17} w={1.800} /></RangeButton>
                  </Ranges>
                  <ChartTitle>Revenue (Last 90 days)</ChartTitle>
                  <RevenueChart />
                </RevenueCard>
                <TopCard>
                  <TopTitle>Top Selling Products</TopTitle>
                  {products.map(p => (
                    <ProductRow key={p.rank}>
                      <Rank>{p.rank}</Rank>
                      <ProductName>{p.name}</ProductName>
                      <Sold><b>{p.sold}</b>Units sold</Sold>
                    </ProductRow>
                  ))}
                </TopCard>
              </Lower>
            </Board>
          </Panel>
        </Main>
      </Browser>

      <EdgeShade />
      <CartButton><MdOutlineShoppingCart size={24} /><CartCount>1</CartCount></CartButton>
    </Desktop>
  );
}
